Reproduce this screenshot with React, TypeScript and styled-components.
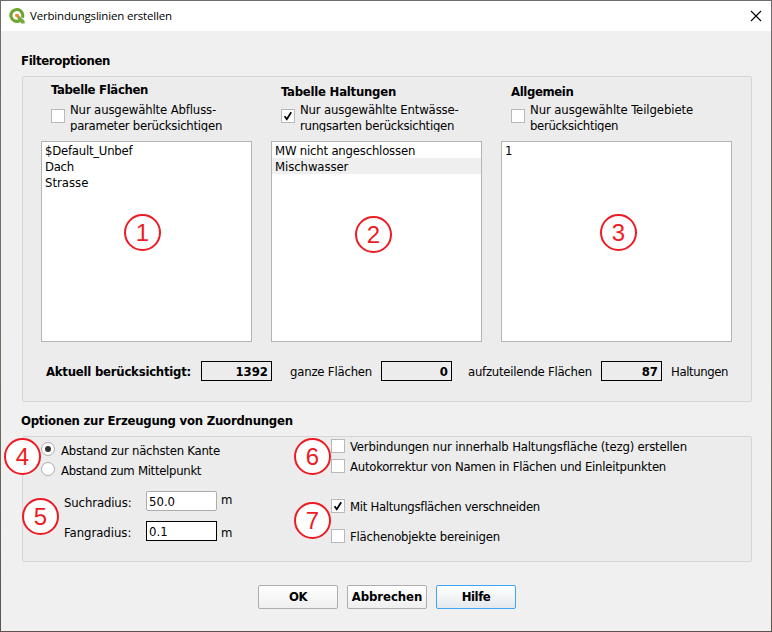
import React from 'react';
import styled, { createGlobalStyle } from 'styled-components';

const GlobalStyle = createGlobalStyle`
  * { box-sizing: border-box; }
  body { margin: 0; background: #6d6a66; overflow: hidden; }
`;

const Desktop = styled.div`
  position: relative;
  width: 772px;
  height: 632px;
  padding: 1px;
  background: linear-gradient(#6f6b6b, #6c7060 60%, #5c534f);
  font: 13px/16px "DejaVu Sans Condensed", "DejaVu Sans", sans-serif;
  color: #000;
`;

const Dialog = styled.main`
  width: 770px;
  height: 630px;
  background: #f0f0f0;
`;

const TitleBar = styled.header`
  display: flex;
  align-items: center;
  height: 30px;
  padding: 0 9px 0 8px;
  background: #fff;
`;

const Title = styled.span`
  flex: 1;
  margin-left: 5px;
  font: 11.5px/16px "Open Sans", sans-serif;
  letter-spacing: -0.18px;
`;

const CloseButton = styled.button`
  display: flex;
  padding: 0;
  border: 0;
  background: none;
`;

const Content = styled.div`
  padding: 22px 19px 0 20px;
`;

const Text = styled.span<{ $track?: number }>`
  white-space: nowrap;
  letter-spacing: ${p => p.$track ?? -0.23}px;
`;

const Heading = styled(Text).attrs({ as: 'h2' })`
  margin: 0;
  font-size: 13px;
  font-weight: bold;
`;

const Group = styled.section`
  margin-left: 1px;
  border: 1px solid #d5d5d5;
  border-radius: 2px;
  background: #ececec;
`;

const FilterGroup = styled(Group)`
  height: 326px;
  margin-top: 7px;
  margin-bottom: 11px;
  padding: 5px 19px 0 18px;
`;

const Columns = styled.div`
  display: grid;
  grid-template-columns: 211px 211px 231px;
  column-gap: 19px;
`;

const Column = styled.div`
  display: flex;
  flex-direction: column;
`;

const ColumnTitle = styled(Heading)<{ $drop?: number }>`
  height: 20px;
  padding: ${p => p.$drop ?? 2}px 0 0 10px;
`;

const FilterCheck = styled.label`
  display: flex;
  gap: 5px;
  height: 30px;
  padding-left: 10px;
`;

const FilterCheckLines = styled.span`
  display: flex;
  flex-direction: column;
  height: 30px;
  overflow: hidden;
`;

const Box = styled.span<{ $top?: number }>`
  display: flex;
  flex: none;
  width: 14px;
  height: 14px;
  margin-top: ${p => p.$top ?? 0}px;
  border: 1px solid #b9b9b9;
  background: #fff;
`;

const ListBox = styled.div`
  height: 201px;
  margin-top: 9px;
  border: 1px solid #b4b4b4;
  background: #fff;
`;

const ListRow = styled.div<{ $current?: boolean }>`
  height: 16px;
  padding: 1px 0 0 3px;
  background: ${p => (p.$current ? '#efefef' : 'transparent')};
`;

const Stats = styled.div`
  display: flex;
  align-items: center;
  height: 20px;
  margin-top: 19px;
  padding-left: 5px;
`;

const StatLabel = styled(Text)<{ $width: number }>`
  flex: none;
  width: ${p => p.$width}px;
  padding-top: 1px;
`;

const StatTitle = styled(StatLabel)`
  font-weight: bold;
`;

const StatValue = styled.output<{ $width: number; $gap?: number }>`
  flex: none;
  width: ${p => p.$width}px;
  height: 20px;
  margin-right: ${p => p.$gap ?? 0}px;
  padding: 2px 3px 0 0;
  border: 1px solid #000;
  text-align: right;
  font-weight: bold;
`;

const OptionsGroup = styled(Group)`
  display: grid;
  grid-template-columns: 290px 1fr;
  height: 126px;
  margin-top: 7px;
  padding: 2px 18px 0;
`;

const RadioRow = styled.label`
  display: flex;
  gap: 6px;
  height: 20px;
  padding-top: 4px;
`;

const RadioDot = styled.span`
  display: flex;
  align-items: center;
  justify-content: center;
  width: 14px;
  height: 14px;
  margin-top: -1px;
  border: 1px solid #adadad;
  border-radius: 50%;
  background: #fff;
  &::after {
    content: '';
    width: 6px;
    height: 6px;
    border-radius: 50%;
  }
`;

const RadioDotOn = styled(RadioDot)`
  &::after { background: #333; }
`;

const RadiusRow = styled.div`
  display: flex;
  height: 20px;
  margin: 12px 0 0 23px;
  & + & { margin-top: 10px; }
`;

const RadiusLabel = styled(Text)`
  width: 82px;
  padding-top: 4px;
`;

const RadiusInput = styled.input<{ $plain?: boolean }>`
  width: 71px;
  height: 20px;
  margin: 0;
  padding: 1px 0 0 2px;
  border: 1px solid ${p => (p.$plain ? '#000' : '#adadad')};
  border-radius: ${p => (p.$plain ? 0 : 2)}px;
  outline: 0;
  background: #fff;
  color: #000;
  font: inherit;
`;

const Unit = styled.span<{ $top: number }>`
  margin-left: 4px;
  padding-top: ${p => p.$top}px;
`;

const OptionRow = styled.label<{ $above?: number }>`
  display: flex;
  gap: 5px;
  height: 20px;
  margin-top: ${p => p.$above ?? 0}px;
`;

const Buttons = styled.footer`
  display: flex;
  gap: 9px;
  margin: 23px 0 0 237px;
`;

const Button = styled.button<{ $default?: boolean }>`
  width: 80px;
  height: 24px;
  padding: 0;
  border: 1px solid ${p => (p.$default ? '#40a4f4' : '#adadad')};
  border-radius: 2px;
  background: ${p => (p.$default ? 'linear-gradient(#fff, #e4e9ee)' : 'linear-gradient(#fff, #efefef)')};
  color: #000;
  font: inherit;
  font-weight: bold;
`;

const Marker = styled.span<{ $x: number; $y: number }>`
  position: absolute;
  left: ${p => p.$x}px;
  top: ${p => p.$y}px;
  width: 37px;
  height: 37px;
  border: 2px solid #ed1c24;
  border-radius: 50%;
  background: #fff;
  color: #ed1c24;
  font: 24px/34px "Liberation Sans", Arial, sans-serif;
  text-align: center;
`;

const markers = [
  { x: 124, y: 214 },
  { x: 355, y: 216 },
  { x: 600, y: 214 },
  { x: 4, y: 438 },
  { x: 22, y: 498 },
  { x: 294, y: 438 },
  { x: 294, y: 502 },
];

type Line = { text: string; track?: number };
type FilterColumn = {
  title: Line;
  drop?: number;
  checked?: boolean;
  lines: Line[];
  items: (Line & { current?: boolean })[];
};

const filterColumns: FilterColumn[] = [
  {
    title: { text: 'Tabelle Flächen', track: -0.32 },
    drop: 0,
    lines: [
      { text: 'Nur ausgewählte Abfluss-', track: -0.14 },
      { text: 'parameter berücksichtigen', track: -0.26 },
    ],
    items: [
      { text: '$Default_Unbef', track: -0.24 },
      { text: 'Dach', track: -0.3 },
      { text: 'Strasse', track: 0 },
    ],
  },
  {
    title: { text: 'Tabelle Haltungen', track: -0.24 },
    checked: true,
    lines: [
      { text: 'Nur ausgewählte Entwässe-', track: -0.16 },
      { text: 'rungsarten berücksichtigen', track: -0.27 },
    ],
    items: [
      { text: 'MW nicht angeschlossen', track: -0.2 },
      { text: 'Mischwasser', track: -0.08, current: true },
    ],
  },
  {
    title: { text: 'Allgemein', track: -0.38 },
    lines: [
      { text: 'Nur ausgewählte Teilgebiete', track: -0.1 },
      { text: 'berücksichtigen', track: -0.33 },
    ],
    items: [{ text: '1', track: 0 }],
  },
];

function Checkbox({ checked, top }: { checked?: boolean; top?: number }) {
  return (
    <Box $top={top}>
      {checked && (
        <svg width="12" height="12" viewBox="0 0 12 12" fill="none">
          <path d="M2.6 6.3 4.8 9.2 9.2 2.2" stroke="#000" strokeWidth="1.8" />
        </svg>
      )}
    </Box>
  );
}

function QgisLogo() {
  return (
    <svg width="16" height="16" viewBox="0 0 16 16" fill="none">
      <path d="M10.7 12.6A5.9 5.9 0 1 1 13.3 9.6" stroke="#6da52f" strokeWidth="3.1" />
      <path d="M8.6 8.1H10.4L15.6 12.8V15.4H12.4L8.6 10.9Z" fill="#75a93a" />
      <path d="M6.2 5.9H9.2L10.5 7.3 8.6 9.8 6.2 8.4Z" fill="#f08a2c" />
    </svg>
  );
}

export default function App() {
  return (
    <Desktop>
      <GlobalStyle />
      <Dialog>
        <TitleBar>
          <QgisLogo />
          <Title>Verbindungslinien erstellen</Title>
          <CloseButton aria-label="Schließen">
            <svg width="12" height="12" viewBox="0 0 12 12" stroke="#000" strokeWidth="1.1">
              <path d="M1 1 11 11M11 1 1 11" />
            </svg>
          </CloseButton>
        </TitleBar>

        <Content>
          <Heading $track={-0.35}>Filteroptionen</Heading>
          <FilterGroup>
            <Columns>
              {filterColumns.map(col => (
                <Column key={col.title.text}>
                  <ColumnTitle $track={col.title.track} $drop={col.drop}>
                    {col.title.text}
                  </ColumnTitle>
                  <FilterCheck>
                    <Checkbox checked={col.checked} top={7} />
                    <FilterCheckLines>
                      {col.lines.map(line => (
                        <Text key={line.text} $track={line.track}>{line.text}</Text>
                      ))}
                    </FilterCheckLines>
                  </FilterCheck>
                  <ListBox>
                    {col.items.map(item => (
                      <ListRow key={item.text} $current={item.current}>
                        <Text $track={item.track}>{item.text}</Text>
                      </ListRow>
                    ))}
                  </ListBox>
                </Column>
              ))}
            </Columns>
            <Stats>
              <StatTitle $width={155} $track={-0.23}>Aktuell berücksichtigt:</StatTitle>
              <StatValue $width={71} $gap={18}>1392</StatValue>
              <StatLabel $width={91} $track={-0.2}>ganze Flächen</StatLabel>
              <StatValue $width={71} $gap={16}>0</StatValue>
              <StatLabel $width={133} $track={-0.25}>aufzuteilende Flächen</StatLabel>
              <StatValue $width={61} $gap={9}>87</StatValue>
              <StatLabel $width={60} $track={-0.4}>Haltungen</StatLabel>
            </Stats>
          </FilterGroup>

          <Heading>Optionen zur Erzeugung von Zuordnungen</Heading>
          <OptionsGroup>
            <div>
              <RadioRow>
                <RadioDotOn />
                <Text $track={-0.24}>Abstand zur nächsten Kante</Text>
              </RadioRow>
              <RadioRow>
                <RadioDot />
                <Text $track={-0.3}>Abstand zum Mittelpunkt</Text>
              </RadioRow>
              <RadiusRow>
                <RadiusLabel $track={-0.12}>Suchradius:</RadiusLabel>
                <RadiusInput defaultValue="50.0" />
                <Unit $top={1}>m</Unit>
              </RadiusRow>
              <RadiusRow>
                <RadiusLabel $track={-0.03}>Fangradius:</RadiusLabel>
                <RadiusInput $plain defaultValue="0.1" />
                <Unit $top={4}>m</Unit>
              </RadiusRow>
            </div>
            <div>
              <OptionRow>
                <Checkbox />
                <Text $track={-0.19}>Verbindungen nur innerhalb Haltungsfläche (tezg) erstellen</Text>
              </OptionRow>
              <OptionRow>
                <Checkbox />
                <Text $track={-0.25}>Autokorrektur von Namen in Flächen und Einleitpunkten</Text>
              </OptionRow>
              <OptionRow $above={20}>
                <Checkbox checked />
                <Text $track={-0.29}>Mit Haltungsflächen verschneiden</Text>
              </OptionRow>
              <OptionRow $above={10}>
                <Checkbox />
                <Text $track={-0.21}>Flächenobjekte bereinigen</Text>
              </OptionRow>
            </div>
          </OptionsGroup>

          <Buttons>
            <Button><Text $track={-0.5}>OK</Text></Button>
            <Button><Text $track={-0.05}>Abbrechen</Text></Button>
            <Button $default><Text $track={-0.45}>Hilfe</Text></Button>
          </Buttons>
        </Content>
      </Dialog>
      {markers.map((m, i) => (
        <Marker key={i} $x={m.x} $y={m.y}>{i + 1}</Marker>
      ))}
    </Desktop>
  );
}
